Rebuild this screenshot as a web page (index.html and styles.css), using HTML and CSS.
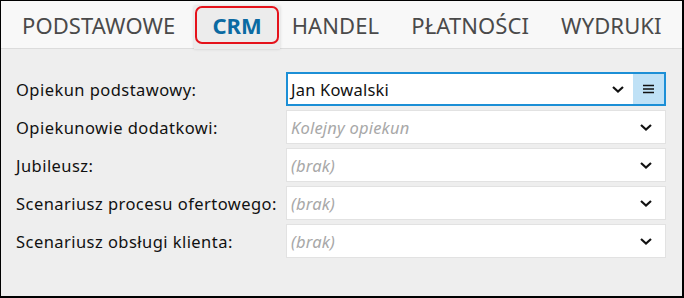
FILE: index.html
```html
<!DOCTYPE html>
<html>
<head>
    <meta charset="UTF-8">
    <title>CRM</title>
    <link rel="stylesheet" href="styles.css">
</head>
<body>
    <div class="window">
        <div class="tabs">
            <div class="tab">PODSTAWOWE</div>
            <div class="tab active"><span class="mark">CRM</span></div>
            <div class="tab">HANDEL</div>
            <div class="tab">PŁATNOŚCI</div>
            <div class="tab">WYDRUKI</div>
        </div>
        <div class="form">
            <label>Opiekun podstawowy:</label>
            <div class="field focused">
                <span class="value">Jan Kowalski</span>
                <span class="chevron"><svg width="12" height="7" viewBox="0 0 12 7"><path d="M1 1l5 4.5L11 1" fill="none" stroke="#111" stroke-width="2.2"/></svg></span>
                <span class="menu-btn"><svg width="11" height="10" viewBox="0 0 11 10"><path d="M0 1.5h11M0 5h11M0 8.5h11" stroke="#111" stroke-width="1.6"/></svg></span>
            </div>

            <label>Opiekunowie dodatkowi:</label>
            <div class="field">
                <span class="value empty">Kolejny opiekun</span>
                <span class="chevron"><svg width="12" height="7" viewBox="0 0 12 7"><path d="M1 1l5 4.5L11 1" fill="none" stroke="#111" stroke-width="2.2"/></svg></span>
            </div>

            <label>Jubileusz:</label>
            <div class="field">
                <span class="value empty">(brak)</span>
                <span class="chevron"><svg width="12" height="7" viewBox="0 0 12 7"><path d="M1 1l5 4.5L11 1" fill="none" stroke="#111" stroke-width="2.2"/></svg></span>
            </div>

            <label>Scenariusz procesu ofertowego:</label>
            <div class="field">
                <span class="value empty">(brak)</span>
                <span class="chevron"><svg width="12" height="7" viewBox="0 0 12 7"><path d="M1 1l5 4.5L11 1" fill="none" stroke="#111" stroke-width="2.2"/></svg></span>
            </div>

            <label>Scenariusz obsługi klienta:</label>
            <div class="field">
                <span class="value empty">(brak)</span>
                <span class="chevron"><svg width="12" height="7" viewBox="0 0 12 7"><path d="M1 1l5 4.5L11 1" fill="none" stroke="#111" stroke-width="2.2"/></svg></span>
            </div>
        </div>
    </div>
</body>
</html>
```

FILE: styles.css
```css
* { box-sizing: border-box; }
body { margin: 0; font-family: "Noto Sans", "Open Sans", sans-serif; color: #1a1a1a; }
.window { width: 684px; height: 298px; border-style: solid; border-color: #000; border-width: 1px 2px 2px 1px; background: #eeeeee; }
.tabs { display: flex; height: 48px; background: #f8f8f8; border-bottom: 1px solid #dcdcdc; padding-left: 5px; }
.tab { display: flex; align-items: center; padding: 0 16px; font-size: 22px; color: #4a4a4a; letter-spacing: 0.1px; }
.tab.active { margin: 5px 0 -1px 3px; align-self: stretch; background: #ececec; box-shadow: 0 0 3px rgba(0,0,0,0.15); padding: 0 1px; }
.tab.active + .tab { padding-left: 12px; }
.mark { display: block; border: 2px solid #e5121b; border-radius: 7px; padding: 2px 15px; margin-top: -6px; color: #0b6aa2; font-weight: bold; letter-spacing: 0; }
.form { display: grid; grid-template-columns: 270px 380px; row-gap: 4px; padding: 23px 0 0 15px; align-items: center; }
label { font-size: 16.5px; color: #111; letter-spacing: 0.45px; }
.field { display: flex; align-items: center; height: 34px; background: #fff; border: 1px solid #e2e2e2; padding-left: 4px; }
.field.focused { border: 2px solid #1c8fd6; padding-left: 3px; }
.value { flex: 1; font-size: 16.5px; color: #111; letter-spacing: 0.2px; }
.value.empty { font-style: italic; color: #a8a8a8; }
.chevron { display: flex; width: 30px; justify-content: center; margin-right: 4px; }
.focused .chevron { margin-right: 0; }
.menu-btn { display: flex; align-items: center; justify-content: center; width: 31px; align-self: stretch; background: #bfe1f6; }
```
